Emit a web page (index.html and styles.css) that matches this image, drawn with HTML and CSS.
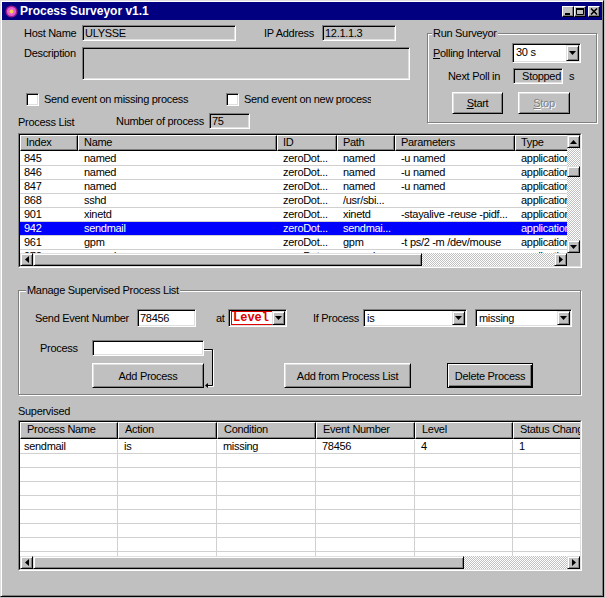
FILE: index.html
```html
<!DOCTYPE html>
<html lang="en">
<head>
<meta charset="utf-8">
<title>Process Surveyor v1.1</title>
<link rel="stylesheet" href="styles.css">
</head>
<body>
<div class="window">
  <div class="titlebar">
    <svg class="app-icon" width="13" height="13" viewBox="0 0 13 13">
      <circle cx="6.5" cy="6.5" r="6" fill="#9a1a8a"/>
      <circle cx="6.5" cy="6.5" r="4.6" fill="#e45ed2"/>
      <circle cx="6.5" cy="6.5" r="2" fill="#f2d24a"/>
    </svg>
    <span class="title-text">Process Surveyor v1.1</span>
    <div class="tb-buttons">
      <span class="tb-btn"><svg width="8" height="7" viewBox="0 0 8 7"><rect x="1" y="5" width="5" height="2" fill="#000"/></svg></span>
      <span class="tb-btn"><svg width="8" height="7" viewBox="0 0 8 7"><path d="M0.5 1.5h7v5h-7z" fill="none" stroke="#000"/><rect x="0" y="0" width="8" height="2" fill="#000"/></svg></span>
      <span class="tb-btn tb-close"><svg width="8" height="7" viewBox="0 0 8 7"><path d="M1 0.5l6 6M7 0.5l-6 6" stroke="#000" stroke-width="1.6"/></svg></span>
    </div>
  </div>

  <div class="client">
    <div class="top">
      <div class="top-left">
        <div class="row host-row">
          <span class="lbl lbl-host">Host Name</span>
          <span class="field ro host-field">ULYSSE</span>
          <span class="lbl lbl-ip">IP Address</span>
          <span class="field ro ip-field">12.1.1.3</span>
        </div>
        <div class="row desc-row">
          <span class="lbl lbl-host">Description</span>
          <span class="field ro desc-field"></span>
        </div>
        <div class="row check-row">
          <span class="check check-missing"><span class="box"></span><span class="check-text">Send event on missing process</span></span>
          <span class="check"><span class="box"></span><span class="check-text check-clip">Send event on new process</span></span>
        </div>
        <div class="row plist-head">
          <span class="lbl lbl-plist">Process List</span>
          <span class="lbl lbl-nproc">Number of process</span>
          <span class="field ro nproc-field">75</span>
        </div>
      </div>

      <div class="group run-group">
        <span class="group-title">Run Surveyor</span>
        <div class="run-row poll-row">
          <span class="lbl lbl-poll"><u>P</u>olling Interval</span>
          <div class="combo poll-combo">
            <span class="combo-text">30 s</span>
            <span class="combo-btn"><svg width="7" height="4" viewBox="0 0 7 4"><path d="M0 0h7L3.5 4z" fill="#000"/></svg></span>
          </div>
        </div>
        <div class="run-row next-row">
          <span class="lbl lbl-next">Next Poll in</span>
          <span class="field ro next-field">Stopped</span>
          <span class="lbl lbl-s">s</span>
        </div>
        <div class="run-row btn-row">
          <span class="btn start-btn"><span><u>S</u>tart</span></span>
          <span class="btn stop-btn disabled"><span><u>S</u>top</span></span>
        </div>
      </div>
    </div>

    <div class="lv plist">
      <div class="lv-inner">
        <div class="lv-body">
          <div class="lv-header">
            <span class="hd pc1">Index</span>
            <span class="hd pc2">Name</span>
            <span class="hd pc3">ID</span>
            <span class="hd pc4">Path</span>
            <span class="hd pc5">Parameters</span>
            <span class="hd pc6">Type</span>
          </div>
          <div class="lv-row"><span class="cell first pc1">845</span><span class="cell pc2">named</span><span class="cell pc3">zeroDot...</span><span class="cell pc4">named</span><span class="cell pc5">-u named</span><span class="cell pc6">application</span></div>
          <div class="lv-row"><span class="cell first pc1">846</span><span class="cell pc2">named</span><span class="cell pc3">zeroDot...</span><span class="cell pc4">named</span><span class="cell pc5">-u named</span><span class="cell pc6">application</span></div>
          <div class="lv-row"><span class="cell first pc1">847</span><span class="cell pc2">named</span><span class="cell pc3">zeroDot...</span><span class="cell pc4">named</span><span class="cell pc5">-u named</span><span class="cell pc6">application</span></div>
          <div class="lv-row"><span class="cell first pc1">868</span><span class="cell pc2">sshd</span><span class="cell pc3">zeroDot...</span><span class="cell pc4">/usr/sbi...</span><span class="cell pc5"></span><span class="cell pc6">application</span></div>
          <div class="lv-row"><span class="cell first pc1">901</span><span class="cell pc2">xinetd</span><span class="cell pc3">zeroDot...</span><span class="cell pc4">xinetd</span><span class="cell pc5">-stayalive -reuse -pidf...</span><span class="cell pc6">application</span></div>
          <div class="lv-row selected"><span class="cell first pc1">942</span><span class="cell pc2">sendmail</span><span class="cell pc3">zeroDot...</span><span class="cell pc4">sendmai...</span><span class="cell pc5"></span><span class="cell pc6">application</span></div>
          <div class="lv-row"><span class="cell first pc1">961</span><span class="cell pc2">gpm</span><span class="cell pc3">zeroDot...</span><span class="cell pc4">gpm</span><span class="cell pc5">-t ps/2 -m /dev/mouse</span><span class="cell pc6">application</span></div>
          <div class="lv-row"><span class="cell first pc1">972</span><span class="cell pc2">named</span><span class="cell pc3">zeroDot...</span><span class="cell pc4">named</span><span class="cell pc5"></span><span class="cell pc6">application</span></div>
        </div>
        <div class="vscroll">
          <span class="sb-btn"><svg width="7" height="4" viewBox="0 0 7 4"><path d="M0 4h7L3.5 0z" fill="#000"/></svg></span>
          <span class="sb-thumb v-thumb"></span>
          <span class="sb-fill"></span>
          <span class="sb-btn"><svg width="7" height="4" viewBox="0 0 7 4"><path d="M0 0h7L3.5 4z" fill="#000"/></svg></span>
        </div>
        <div class="hscroll">
          <span class="sb-btn"><svg width="4" height="7" viewBox="0 0 4 7"><path d="M4 0v7L0 3.5z" fill="#000"/></svg></span>
          <span class="sb-thumb h-thumb-p"></span>
          <span class="sb-fill"></span>
          <span class="sb-btn"><svg width="4" height="7" viewBox="0 0 4 7"><path d="M0 0v7L4 3.5z" fill="#000"/></svg></span>
        </div>
        <div class="sb-corner"></div>
      </div>
    </div>

    <div class="group manage-group">
      <span class="group-title">Manage Supervised Process List</span>
      <div class="manage-row">
        <span class="lbl lbl-event">Send Event Number</span>
        <span class="field event-field">78456</span>
        <span class="lbl lbl-at">at</span>
        <div class="combo level-combo">
          <span class="combo-text"><span class="level-box">Level<span class="level-dot">&middot;</span></span></span>
          <span class="combo-btn"><svg width="7" height="4" viewBox="0 0 7 4"><path d="M0 0h7L3.5 4z" fill="#000"/></svg></span>
        </div>
        <span class="lbl lbl-if">If Process</span>
        <div class="combo is-combo">
          <span class="combo-text">is</span>
          <span class="combo-btn"><svg width="7" height="4" viewBox="0 0 7 4"><path d="M0 0h7L3.5 4z" fill="#000"/></svg></span>
        </div>
        <div class="combo missing-combo">
          <span class="combo-text">missing</span>
          <span class="combo-btn"><svg width="7" height="4" viewBox="0 0 7 4"><path d="M0 0h7L3.5 4z" fill="#000"/></svg></span>
        </div>
      </div>
      <div class="manage-grid">
        <span class="lbl lbl-process">Process</span>
        <span class="field process-field"></span>
        <svg class="bracket" width="12" height="48" viewBox="0 0 12 48">
          <path d="M0 9.5h8.5v36H3" fill="none" stroke="#000"/>
          <path d="M0 10.5h7.5M9.5 10v36.5H4" fill="none" stroke="#fff"/>
          <path d="M1 45.5l3-2.5v5z" fill="#000"/>
        </svg>
        <span class="btn add-btn"><span>Add Process</span></span>
        <div class="manage-buttons">
          <span class="btn addlist-btn"><span>Add from Process List</span></span>
          <span class="btn default delete-btn"><span>Delete Process</span></span>
        </div>
      </div>
    </div>

    <div class="lbl lbl-supervised">Supervised</div>
    <div class="lv slist">
      <div class="lv-inner slist-inner">
        <div class="lv-body">
          <div class="lv-header s-header">
            <span class="hd sc1">Process Name</span>
            <span class="hd sc2">Action</span>
            <span class="hd sc3">Condition</span>
            <span class="hd sc4">Event Number</span>
            <span class="hd sc5">Level</span>
            <span class="hd sc6">Status Change</span>
          </div>
          <div class="lv-row grid-row"><span class="cell first sc1">sendmail</span><span class="cell sc2">is</span><span class="cell sc3">missing</span><span class="cell sc4">78456</span><span class="cell sc5">4</span><span class="cell sc6">1</span></div>
          <div class="lv-row grid-row"><span class="cell sc1"></span><span class="cell sc2"></span><span class="cell sc3"></span><span class="cell sc4"></span><span class="cell sc5"></span><span class="cell sc6"></span></div>
          <div class="lv-row grid-row"><span class="cell sc1"></span><span class="cell sc2"></span><span class="cell sc3"></span><span class="cell sc4"></span><span class="cell sc5"></span><span class="cell sc6"></span></div>
          <div class="lv-row grid-row"><span class="cell sc1"></span><span class="cell sc2"></span><span class="cell sc3"></span><span class="cell sc4"></span><span class="cell sc5"></span><span class="cell sc6"></span></div>
          <div class="lv-row grid-row"><span class="cell sc1"></span><span class="cell sc2"></span><span class="cell sc3"></span><span class="cell sc4"></span><span class="cell sc5"></span><span class="cell sc6"></span></div>
          <div class="lv-row grid-row"><span class="cell sc1"></span><span class="cell sc2"></span><span class="cell sc3"></span><span class="cell sc4"></span><span class="cell sc5"></span><span class="cell sc6"></span></div>
          <div class="lv-row grid-row"><span class="cell sc1"></span><span class="cell sc2"></span><span class="cell sc3"></span><span class="cell sc4"></span><span class="cell sc5"></span><span class="cell sc6"></span></div>
          <div class="lv-row grid-row"><span class="cell sc1"></span><span class="cell sc2"></span><span class="cell sc3"></span><span class="cell sc4"></span><span class="cell sc5"></span><span class="cell sc6"></span></div>
          <div class="lv-row grid-row"><span class="cell sc1"></span><span class="cell sc2"></span><span class="cell sc3"></span><span class="cell sc4"></span><span class="cell sc5"></span><span class="cell sc6"></span></div>
        </div>
        <div class="hscroll">
          <span class="sb-btn"><svg width="4" height="7" viewBox="0 0 4 7"><path d="M4 0v7L0 3.5z" fill="#000"/></svg></span>
          <span class="sb-thumb h-thumb-s"></span>
          <span class="sb-fill"></span>
          <span class="sb-btn"><svg width="4" height="7" viewBox="0 0 4 7"><path d="M0 0v7L4 3.5z" fill="#000"/></svg></span>
        </div>
      </div>
    </div>
  </div>
</div>
</body>
</html>
```

FILE: styles.css
```css
* { box-sizing: border-box; }
html, body { margin: 0; padding: 0; }
body {
  width: 605px;
  height: 598px;
  overflow: hidden;
  background: #c0c0c0;
  font-family: "Liberation Sans", Arial, sans-serif;
  font-size: 11px;
  letter-spacing: -0.3px;
  color: #000;
}

/* ---------- window frame ---------- */
.window {
  width: 604px;
  height: 597px;
  border: 1px solid;
  border-color: #dfdfdf #000 #000 #dfdfdf;
  padding: 1px;
  background: #c0c0c0;
  box-shadow: inset 1px 1px #fff, inset -1px -1px #808080;
}
.titlebar {
  height: 18px;
  background: #000080;
  display: flex;
  align-items: center;
  padding: 0 2px 0 3px;
}
.app-icon { flex: none; }
.title-text {
  margin-left: 2px;
  color: #fff;
  font-weight: bold;
  font-size: 12px;
  letter-spacing: 0;
  white-space: nowrap;
}
.tb-buttons { margin-left: auto; display: flex; }
.tb-btn {
  width: 12px;
  height: 11px;
  background: #c0c0c0;
  border: 1px solid;
  border-color: #fff #000 #000 #fff;
  box-shadow: inset -1px -1px #808080;
  display: flex;
  align-items: center;
  justify-content: center;
}
.tb-close { margin-left: 2px; }

/* ---------- generic controls ---------- */
.row { display: flex; align-items: center; }
.lbl { line-height: 13px; white-space: nowrap; flex: none; }
.field {
  display: block;
  flex: none;
  height: 16px;
  border: 1px solid;
  border-color: #808080 #fff #fff #808080;
  box-shadow: inset 1px 1px #000, inset -1px -1px #dfdfdf;
  padding: 0 2px;
  line-height: 14px;
  white-space: nowrap;
  overflow: hidden;
  background: #fff;
}
.field.ro { background: #c0c0c0; }

.combo {
  display: flex;
  flex: none;
  height: 19px;
  border: 1px solid;
  border-color: #808080 #fff #fff #808080;
  box-shadow: inset 1px 1px #000, inset -1px -1px #dfdfdf;
  padding: 1px;
  background: #fff;
}
.combo-text {
  flex: 1;
  padding-left: 2px;
  line-height: 15px;
  white-space: nowrap;
  overflow: hidden;
}
.combo-btn, .sb-btn {
  flex: none;
  width: 13px;
  background: #c0c0c0;
  border: 1px solid;
  border-color: #dfdfdf #000 #000 #dfdfdf;
  box-shadow: inset 1px 1px #fff, inset -1px -1px #808080;
  display: flex;
  align-items: center;
  justify-content: center;
}
.sb-btn { height: 13px; }

.btn {
  display: flex;
  flex: none;
  align-items: center;
  justify-content: center;
  background: #c0c0c0;
  border: 1px solid;
  border-color: #fff #000 #000 #fff;
  box-shadow: inset 1px 1px #dfdfdf, inset -1px -1px #808080;
  white-space: nowrap;
}
.btn.default {
  border-color: #000;
  box-shadow: inset 1px 1px #fff, inset -1px -1px #000, inset -2px -2px #808080;
}
.btn.disabled { color: #808080; text-shadow: 1px 1px #fff; }

.check { display: flex; align-items: center; flex: none; }
.box {
  width: 13px;
  height: 13px;
  flex: none;
  background: #fff;
  border: 1px solid;
  border-color: #808080 #fff #fff #808080;
  box-shadow: inset 1px 1px #000, inset -1px -1px #dfdfdf;
}
.check-text { margin-left: 5px; line-height: 13px; white-space: nowrap; }

.group {
  border: 1px solid #808080;
  box-shadow: inset 1px 1px #fff, 1px 1px #fff;
  flex: none;
}
.group-title {
  display: block;
  width: max-content;
  margin-top: -7px;
  padding: 0 1px;
  line-height: 13px;
  background: #c0c0c0;
}

/* ---------- top area ---------- */
.top { display: flex; align-items: flex-start; }
.top-left { width: 425px; flex: none; }

.host-row { margin-top: 5px; height: 16px; padding-left: 22px; }
.lbl-host { width: 58px; }
.host-field { width: 154px; }
.lbl-ip { margin-left: 28px; width: 58px; }
.ip-field { width: 74px; }

.desc-row { margin-top: 6px; height: 33px; padding-left: 22px; align-items: flex-start; }
.desc-field { width: 328px; height: 33px; }

.check-row { margin-top: 12px; height: 14px; padding-left: 24px; }
.check-missing { width: 200px; }
.check-clip { width: 127px; overflow: hidden; }

.plist-head { margin-top: 7px; height: 16px; padding-left: 16px; }
.lbl-plist { width: 98px; align-self: flex-end; }
.lbl-nproc { width: 93px; }
.nproc-field { width: 41px; }

.run-group {
  margin-top: 13px;
  width: 170px;
  height: 90px;
}
.run-group .group-title { margin-left: 4px; }
.run-row { display: flex; align-items: center; }
.poll-row { margin-top: 3px; height: 20px; }
.lbl-poll { margin-left: 5px; width: 79px; }
.poll-combo { width: 69px; height: 20px; }
.next-row { margin-top: 5px; height: 16px; }
.lbl-next { width: 85px; text-align: right; padding-right: 13px; }
.next-field { width: 50px; text-align: right; padding-right: 1px; }
.lbl-s { margin-left: 6px; }
.btn-row { margin-top: 8px; height: 22px; }
.start-btn { margin-left: 24px; width: 51px; height: 22px; }
.stop-btn { margin-left: 15px; width: 52px; height: 22px; }

/* ---------- list views ---------- */
.lv {
  margin-left: 16px;
  width: 564px;
  border: 1px solid;
  border-color: #808080 #fff #fff #808080;
}
.lv-inner {
  height: 100%;
  border: 1px solid;
  border-color: #000 #dfdfdf #dfdfdf #000;
  display: grid;
  grid-template-columns: 1fr 13px;
  grid-template-rows: 1fr 13px;
}
.plist { margin-top: 4px; height: 135px; }
.lv-body { background: #fff; overflow: hidden; min-width: 0; }
.lv-header { display: flex; height: 16px; }
.hd {
  flex: none;
  height: 100%;
  background: #c0c0c0;
  border: 1px solid;
  border-color: #fff #000 #000 #fff;
  box-shadow: inset -1px -1px #808080;
  padding-left: 5px;
  line-height: 13px;
  white-space: nowrap;
  overflow: hidden;
}
.lv-row {
  display: flex;
  height: 14px;
  border-bottom: 1px solid #d0d0d0;
  width: max-content;
  min-width: 100%;
}
.lv-header + .lv-row { margin-top: 1px; }
.cell {
  flex: none;
  padding-left: 6px;
  line-height: 13px;
  white-space: nowrap;
  overflow: hidden;
}
.cell.first { padding-left: 4px; }
.lv-row.selected { background: #0000ff; color: #fff; }

.pc1 { width: 58px; }
.pc2 { width: 199px; }
.pc3 { width: 60px; }
.pc4 { width: 58px; }
.pc5 { width: 120px; }
.pc6 { width: 90px; }

.vscroll {
  display: flex;
  flex-direction: column;
  background: repeating-conic-gradient(#c0c0c0 0 25%, #fff 0 50%) 0 0 / 2px 2px;
}
.hscroll {
  display: flex;
  background: repeating-conic-gradient(#c0c0c0 0 25%, #fff 0 50%) 0 0 / 2px 2px;
}
.sb-fill { flex: 1; }
.sb-thumb {
  flex: none;
  background: #c0c0c0;
  border: 1px solid;
  border-color: #dfdfdf #000 #000 #dfdfdf;
  box-shadow: inset 1px 1px #fff, inset -1px -1px #808080;
}
.v-thumb { margin-top: 18px; height: 11px; }
.h-thumb-p { width: 389px; }
.h-thumb-s { width: 431px; }
.sb-corner { background: #c0c0c0; }

/* ---------- manage group ---------- */
.manage-group {
  margin-top: 22px;
  margin-left: 16px;
  width: 563px;
  height: 105px;
}
.manage-group .group-title { margin-left: 7px; }
.manage-row {
  display: flex;
  align-items: center;
  margin-top: 12px;
  height: 18px;
  padding-left: 16px;
}
.lbl-event { width: 102px; }
.event-field { width: 59px; height: 18px; line-height: 16px; }
.lbl-at { margin-left: 20px; width: 12px; }
.level-combo { width: 59px; height: 18px; }
.level-box {
  display: inline-block;
  border: 1px solid #e00000;
  color: #e00000;
  font-family: "Liberation Mono", "Courier New", monospace;
  font-weight: bold;
  font-size: 12px;
  letter-spacing: 0;
  line-height: 12px;
  padding: 0 0 0 1px;
  margin-left: -1px;
  width: 43px;
  overflow: hidden;
}
.level-dot { margin-left: 2px; }
.lbl-if { margin-left: 26px; width: 50px; }
.is-combo { width: 104px; height: 18px; }
.missing-combo { margin-left: 8px; width: 97px; height: 18px; }
.level-combo .combo-text, .is-combo .combo-text, .missing-combo .combo-text { line-height: 14px; }

.manage-grid {
  display: grid;
  grid-template-columns: 52px 112px 12px auto;
  grid-template-rows: 16px 25px;
  row-gap: 7px;
  margin-top: 13px;
  padding-left: 21px;
}
.lbl-process { grid-column: 1; grid-row: 1; align-self: center; }
.process-field { grid-column: 2; grid-row: 1; width: 112px; }
.bracket { grid-column: 3; grid-row: 1 / 3; }
.add-btn { grid-column: 2; grid-row: 2; height: 25px; }
.manage-buttons { grid-column: 4; grid-row: 2; display: flex; }
.addlist-btn { margin-left: 68px; width: 127px; height: 25px; }
.delete-btn { margin-left: 36px; width: 86px; height: 25px; }

/* ---------- supervised ---------- */
.lbl-supervised { margin-top: 10px; margin-left: 16px; }
.slist { margin-top: 2px; height: 151px; }
.slist-inner { grid-template-columns: 1fr; grid-template-rows: 1fr 13px; }
.s-header { height: 17px; }
.grid-row .cell { border-right: 1px solid #d0d0d0; padding-left: 6px; }
.grid-row .cell.first { padding-left: 4px; }
.sc1 { width: 98px; }
.sc2 { width: 99px; }
.sc3 { width: 99px; }
.sc4 { width: 99px; }
.sc5 { width: 98px; }
.sc6 { width: 110px; }
.s-header .hd { padding-left: 6px; }
```
